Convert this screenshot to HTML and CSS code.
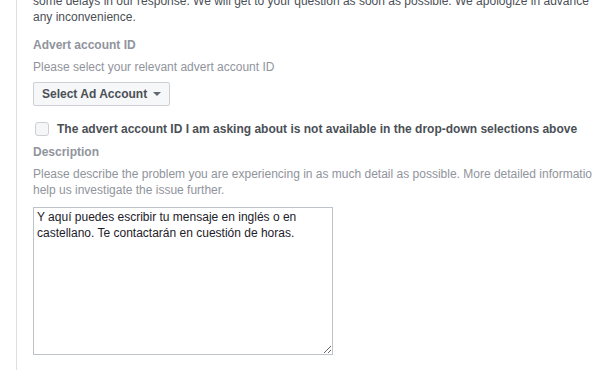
FILE: index.html
```html
<!DOCTYPE html>
<html lang="en">
<head>
    <meta charset="UTF-8">
    <title>Contact - Ads support</title>
    <link rel="stylesheet" href="styles.css">
</head>
<body>

    <div class="page">
        <div class="form-panel">
            <p class="intro">some delays in our response. We will get to your question as soon as possible. We apologize in advance for any inconvenience.</p>

            <!-- Advert account -->
            <div class="field">
                <label class="field-label">Advert account ID</label>
                <p class="field-help">Please select your relevant advert account ID</p>
                <button class="select-btn">Select Ad Account <span class="caret"></span></button>
            </div>

            <label class="check-row">
                <input type="checkbox">
                <span>The advert account ID I am asking about is not available in the drop-down selections above</span>
            </label>

            <!-- Description -->
            <div class="field">
                <label class="field-label">Description</label>
                <p class="field-help">Please describe the problem you are experiencing in as much detail as possible. More detailed information will help us investigate the issue further.</p>
                <textarea class="description">Y aquí puedes escribir tu mensaje en inglés o en castellano. Te contactarán en cuestión de horas.</textarea>
            </div>
        </div>
    </div>

</body>
</html>
```

FILE: styles.css
```css
body {
    margin: 0;
    font-family: "Liberation Sans", Arial, sans-serif;
    font-size: 12px;
    line-height: 16px;
    background-color: #fff;
    overflow: hidden;
}

.page {
    padding-left: 16px;
}

/* Form panel with left rule */
.form-panel {
    border-left: 1px solid #dddfe2;
    padding-left: 16px;
    width: 598px;
    height: 370px;
    overflow: hidden;
}

.intro {
    margin: -7px 0 0 0;
    max-width: 575px;
    color: #4b4f56;
}

.field-label {
    display: block;
    font-weight: bold;
    color: #90949c;
    margin-top: 12px;
}

.field-help {
    margin: 6px 0 0 0;
    color: #90949c;
}

/* Select button */
.select-btn {
    display: block;
    margin-top: 7px;
    height: 24px;
    padding: 0 8px;
    font-family: inherit;
    font-size: 12px;
    font-weight: bold;
    color: #4b4f56;
    background-color: #f6f7f9;
    border: 1px solid #ced0d4;
    border-radius: 2px;
}

.caret {
    display: inline-block;
    width: 0;
    height: 0;
    margin-left: 3px;
    vertical-align: 2px;
    border-left: 4px solid transparent;
    border-right: 4px solid transparent;
    border-top: 4px solid #606770;
}

/* Checkbox row */
.check-row {
    display: flex;
    align-items: center;
    margin-top: 15px;
    font-weight: bold;
    color: #4b4f56;
    white-space: nowrap;
}

.check-row input {
    appearance: none;
    width: 14px;
    height: 14px;
    margin: 0 8px 0 2px;
    border: 1px solid #ccd0d5;
    border-radius: 3px;
    background-color: #f5f6f7;
}

.check-row + .field .field-label {
    margin-top: 7px;
}

/* Description box */
.description {
    display: block;
    margin-top: 9px;
    width: 300px;
    height: 148px;
    box-sizing: border-box;
    padding: 1px 3px;
    font-family: inherit;
    font-size: 12px;
    line-height: 16px;
    color: #1d2129;
    border: 1px solid #bec3c9;
    border-radius: 0;
    resize: vertical;
}
```
